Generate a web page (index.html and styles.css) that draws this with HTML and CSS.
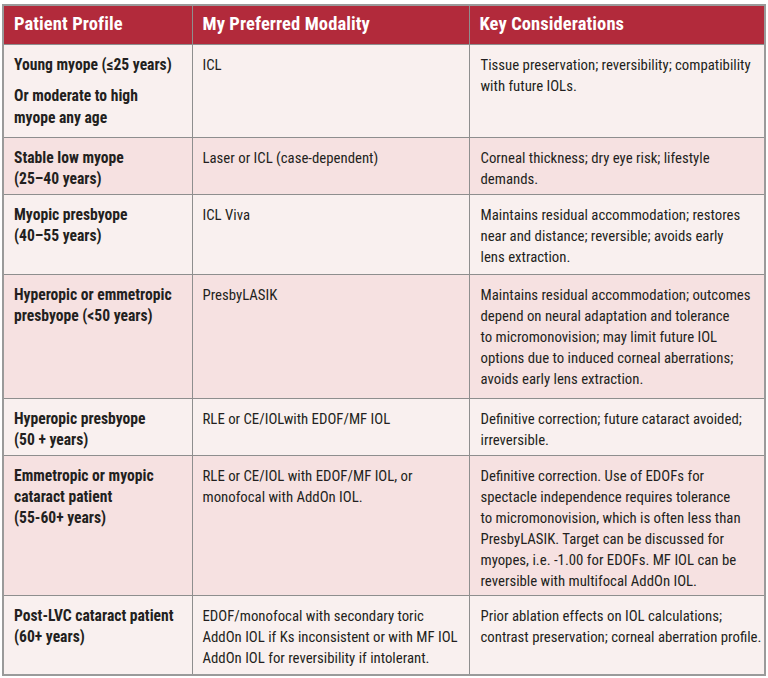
FILE: index.html
```html
<!DOCTYPE html>
<html lang="en">
<head>
<meta charset="utf-8">
<title>Patient Profile — Preferred Modality</title>
<link rel="stylesheet" href="styles.css">
</head>
<body>
<table class="grid">
  <colgroup>
    <col class="c1"><col class="c2"><col class="c3">
  </colgroup>
  <thead>
    <tr class="head">
      <th>Patient Profile</th>
      <th>My Preferred Modality</th>
      <th>Key Considerations</th>
    </tr>
  </thead>
  <tbody>
    <tr class="light r1">
      <td class="profile"><p>Young myope (≤25 years)</p><p class="gap">Or moderate to high<br>myope any age</p></td>
      <td>ICL</td>
      <td class="key">Tissue preservation; reversibility; compatibility<br>with future IOLs.</td>
    </tr>
    <tr class="pink r2">
      <td class="profile">Stable low myope<br>(25–40 years)</td>
      <td>Laser or ICL (case-dependent)</td>
      <td class="key">Corneal thickness; dry eye risk; lifestyle<br>demands.</td>
    </tr>
    <tr class="light r3">
      <td class="profile">Myopic presbyope<br>(40–55 years)</td>
      <td>ICL Viva</td>
      <td class="key">Maintains residual accommodation; restores<br>near and distance; reversible; avoids early<br>lens extraction.</td>
    </tr>
    <tr class="pink r4">
      <td class="profile">Hyperopic or emmetropic<br>presbyope (&lt;50 years)</td>
      <td>PresbyLASIK</td>
      <td class="key">Maintains residual accommodation; outcomes<br>depend on neural adaptation and tolerance<br>to micromonovision; may limit future IOL<br>options due to induced corneal aberrations;<br>avoids early lens extraction.</td>
    </tr>
    <tr class="light r5">
      <td class="profile">Hyperopic presbyope<br>(50 + years)</td>
      <td>RLE or CE/IOLwith EDOF/MF IOL</td>
      <td class="key">Definitive correction; future cataract avoided;<br>irreversible.</td>
    </tr>
    <tr class="pink r6">
      <td class="profile">Emmetropic or myopic<br>cataract patient<br>(55-60+ years)</td>
      <td>RLE or CE/IOL with EDOF/MF IOL, or<br>monofocal with AddOn IOL.</td>
      <td class="key">Definitive correction. Use of EDOFs for<br>spectacle independence requires tolerance<br>to micromonovision, which is often less than<br>PresbyLASIK. Target can be discussed for<br>myopes, i.e. -1.00 for EDOFs. MF IOL can be<br>reversible with multifocal AddOn IOL.</td>
    </tr>
    <tr class="light r7">
      <td class="profile">Post-LVC cataract patient<br>(60+ years)</td>
      <td>EDOF/monofocal with secondary toric<br>AddOn IOL if Ks inconsistent or with MF IOL<br>AddOn IOL for reversibility if intolerant.</td>
      <td class="key">Prior ablation effects on IOL calculations;<br>contrast preservation; corneal aberration profile.</td>
    </tr>
  </tbody>
</table>
</body>
</html>
```
FILE: styles.css
```css
html, body {
  margin: 0;
  background: #ffffff;
}
body {
  padding: 4px 0 0 2px;
  font-family: "Roboto Condensed", Roboto, "Liberation Sans", sans-serif;
  font-stretch: 75%;
  color: #231f20;
}
.grid {
  border-collapse: collapse;
  width: 762px;
  table-layout: fixed;
  border: 2px solid #9a9a9a;
}
.c1 { width: 189px; }
.c2 { width: 277px; }
.c3 { width: 296px; }

.head th {
  background: #b22a3b;
  color: #ffffff;
  font-weight: 700;
  font-size: 18.5px;
  line-height: 22px;
  text-align: left;
  height: 39px;
  padding: 0 9px 2px 10px;
  border: 1px solid #8e8e8e;
  border-top: 2px solid #9a9a9a;
  letter-spacing: 0.1px;
  box-sizing: border-box;
}
.grid td {
  vertical-align: top;
  padding: 10px 6px 3px 10px;
  font-size: 14.8px;
  line-height: 21px;
  border: 1px solid #8e8e8e;
  box-sizing: border-box;
}
.grid td.key {
  white-space: nowrap;
  padding-left: 11px;
}
.grid td.profile {
  font-weight: 700;
  font-size: 15.6px;
}
.grid p { margin: 0; }
.grid p.gap { margin-top: 9px; line-height: 22px; }

.light td { background: #f9f0ef; }
.pink td { background: #f6e1e1; }

.r1 td { height: 93px; }
.r2 td { height: 57px; }
.r3 td { height: 80px; }
.r4 td { height: 124px; }
.r5 td { height: 57px; }
.r6 td { height: 139px; }
.r7 td { height: 80px; }
```
